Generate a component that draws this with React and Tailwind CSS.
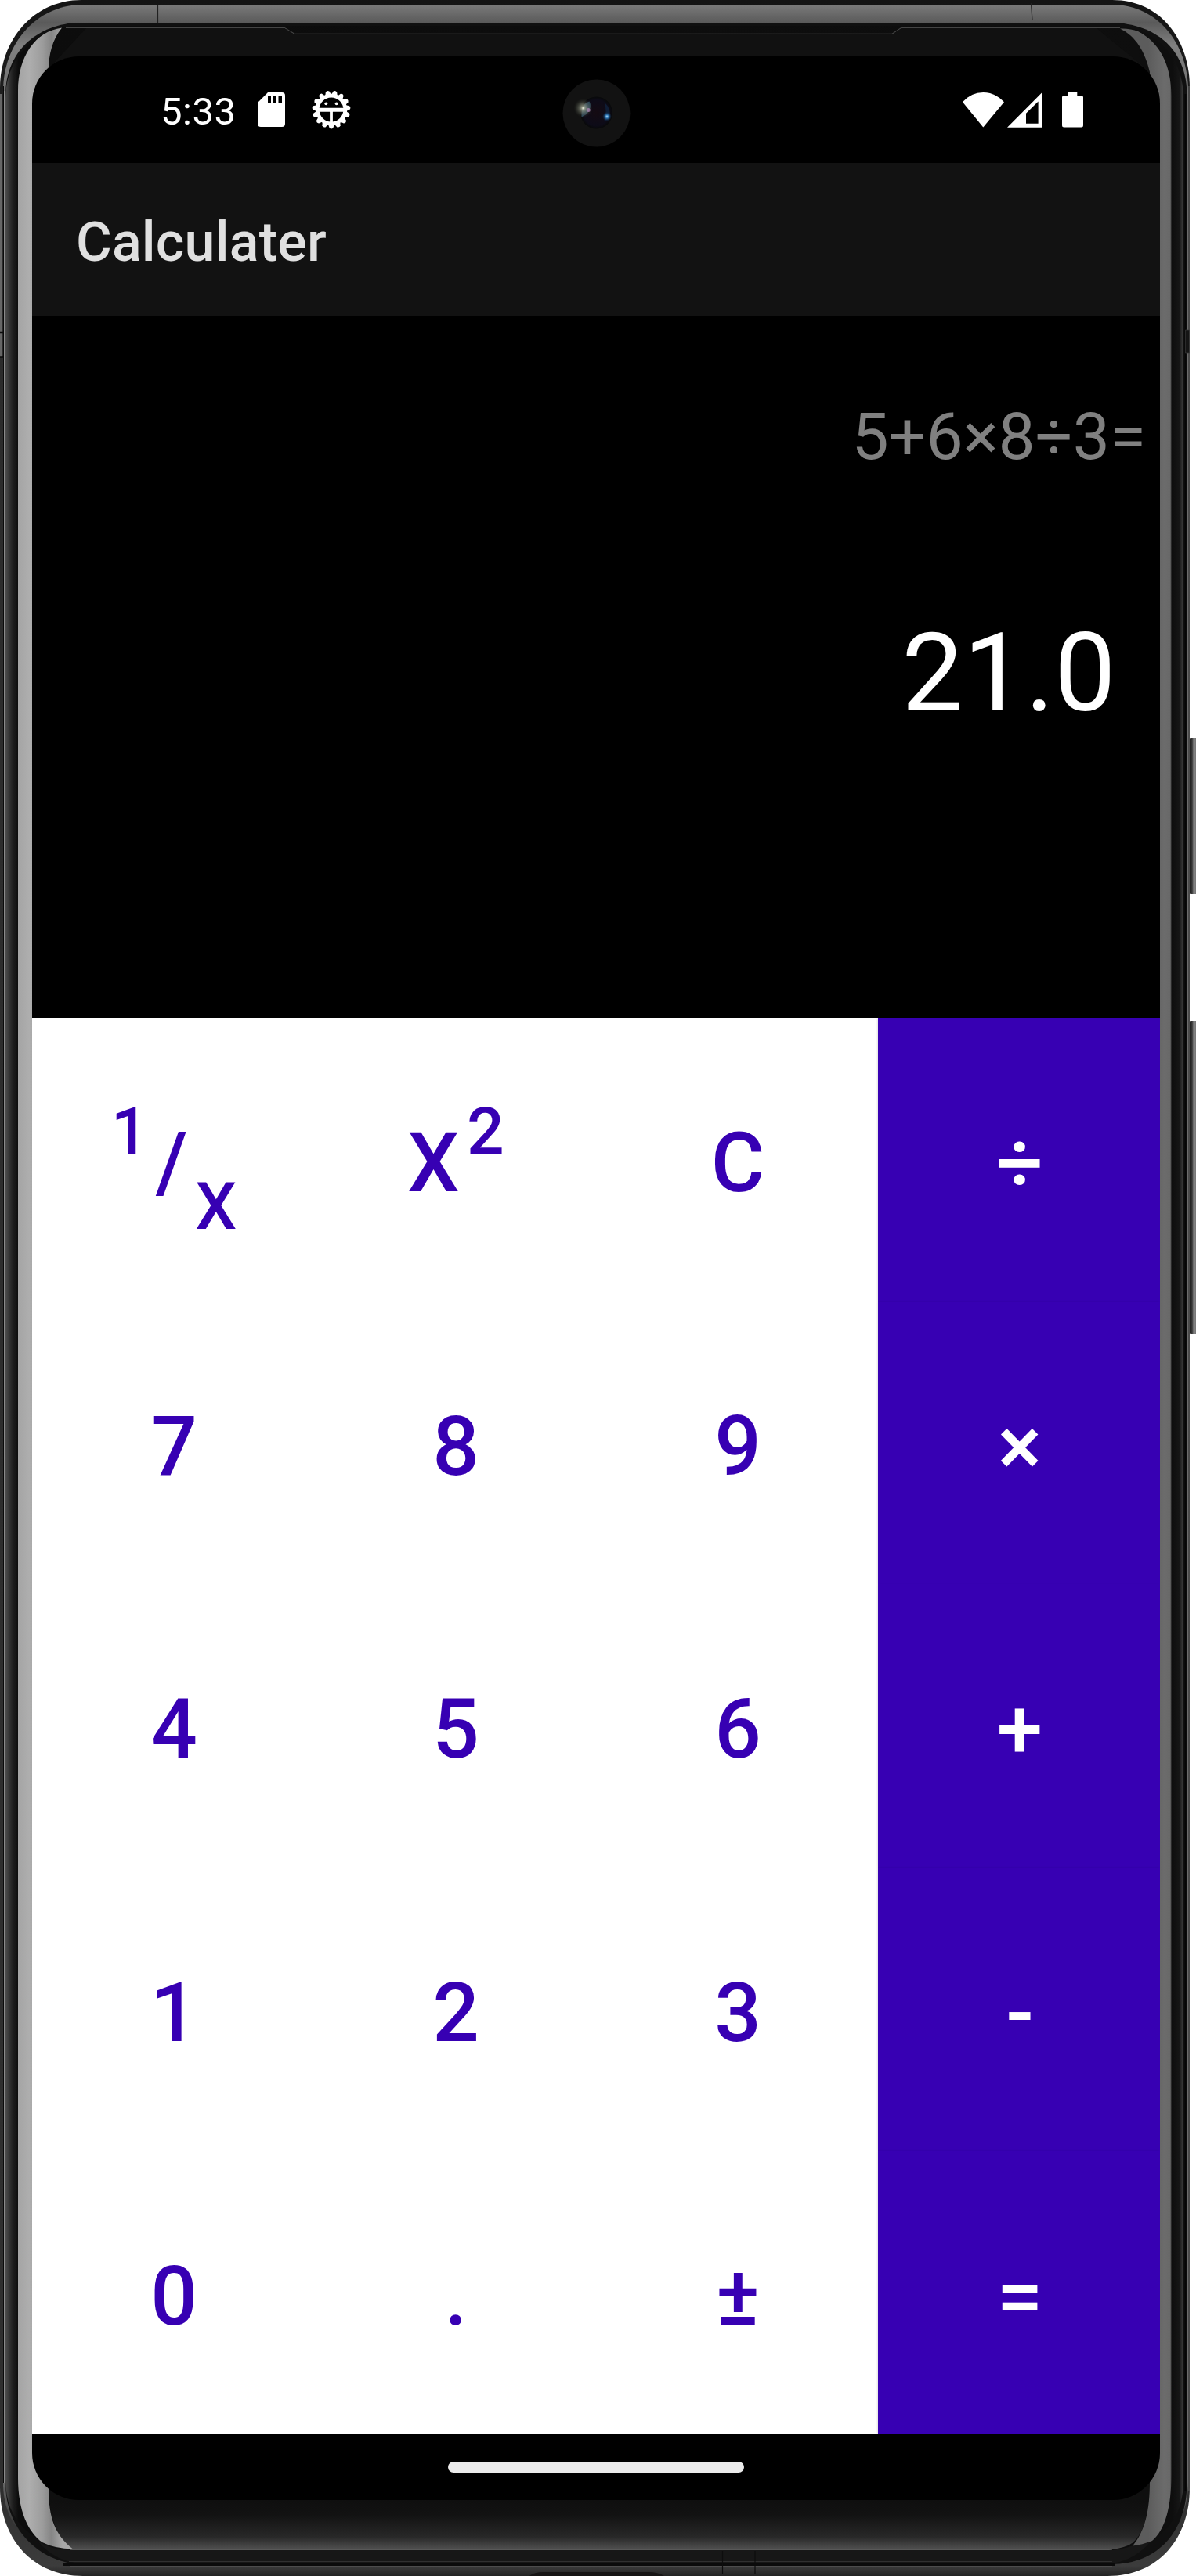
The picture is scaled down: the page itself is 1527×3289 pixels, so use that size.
import React from "react";

const TEETH = Array.from({ length: 15 }, (_, i) => 180 + i * 24);

function SdCardIcon() {
  return (
    <svg width="35" height="44" viewBox="0 0 35 44">
      <path
        fill="#fff"
        fillRule="evenodd"
        d="M13 0H31Q35 0 35 4V40Q35 44 31 44H4Q0 44 0 40V13ZM13 5V13.500H17V5ZM20 5V13.500H24V5ZM26.500 5V13.500H31V5Z"
      />
    </svg>
  );
}

function BugGearIcon() {
  return (
    <svg width="50" height="50" viewBox="-25 -25 50 50">
      {TEETH.map((a) => (
        <path key={a} transform={`rotate(${a})`} fill="#fff" d="M-4.200 -18L-2.300 -23.500Q0 -25.500 2.300 -23.500L4.200 -18Z" />
      ))}
      <circle r="17.800" fill="none" stroke="#fff" strokeWidth="4.800" />
      <path d="M-16 -2.300H16V2.700H1.900V16H-1.900V2.700H-16Z" fill="#fff" />
      <circle cx="-6.700" cy="-7.700" r="1.900" fill="#fff" />
      <circle cx="6.700" cy="-7.700" r="1.900" fill="#fff" />
    </svg>
  );
}

function WifiIcon() {
  return (
    <svg width="53" height="45" viewBox="0 0 53 45">
      <path fill="#fff" d="M0 12.300Q11 0 26.300 0Q41.500 0 53 12.300L26.300 44.500Z" />
    </svg>
  );
}

function SignalIcon() {
  return (
    <svg width="45" height="45" viewBox="0 0 45 45">
      <path fill="#fff" fillRule="evenodd" d="M0 44.700L44.300 0.300V44.700ZM24 26.800V39.800H39.600V11.500Z" />
    </svg>
  );
}

function BatteryIcon() {
  return (
    <svg width="27" height="46" viewBox="0 0 27 46">
      <path fill="#fff" d="M8 0H19.300V5H24.500Q27 5 27 7.500V43Q27 45.500 24.500 45.500H2.500Q0 45.500 0 43V7.500Q0 5 2.500 5H8Z" />
    </svg>
  );
}

function Camera() {
  return (
    <svg className="absolute left-[677px] top-[29px]" width="87" height="87" viewBox="-43.500 -43.500 87 87">
      <defs>
        <radialGradient id="lens">
          <stop offset="0" stopColor="#140a12" />
          <stop offset="0.8" stopColor="#0d0b18" />
          <stop offset="1" stopColor="#080909" />
        </radialGradient>
        <radialGradient id="glowWarm">
          <stop offset="0" stopColor="#f0f2e0" />
          <stop offset="0.2" stopColor="#a0a692" stopOpacity="0.8" />
          <stop offset="1" stopColor="#30352c" stopOpacity="0" />
        </radialGradient>
        <radialGradient id="glowBlue">
          <stop offset="0" stopColor="#b0e0ff" />
          <stop offset="0.35" stopColor="#2f76b4" />
          <stop offset="1" stopColor="#0c2748" stopOpacity="0" />
        </radialGradient>
      </defs>
      <circle r="43" fill="#121212" />
      <circle cy="-0.500" r="20.500" fill="url(#lens)" />
      <path d="M-19 5Q-20 -12 -9 -15Q-5 -8 -12 1Z" fill="#34566c" opacity="0.8" />
      <path d="M10 -14Q19 -6 17 6L10 10Q14 -3 10 -14Z" fill="#10294a" opacity="0.6" />
      <circle cx="-17" cy="-6.500" r="12" fill="url(#glowWarm)" />
      <circle cx="-10.300" cy="-4" r="2.500" fill="#a985b0" opacity="0.8" />
      <circle cx="13.500" cy="4.300" r="6" fill="url(#glowBlue)" />
    </svg>
  );
}

function DeviceFrame() {
  return (
    <svg className="absolute inset-0" width="1527" height="3289" viewBox="0 0 1527 3289">
      <defs>
        <linearGradient id="body" x1="0" y1="0" x2="0" y2="1">
          <stop offset="0" stopColor="#141414" />
          <stop offset="0.03" stopColor="#1c1c1c" />
          <stop offset="0.06" stopColor="#2b2b2b" />
          <stop offset="0.97" stopColor="#2f2f2f" />
          <stop offset="0.996" stopColor="#3c3c3c" />
          <stop offset="1" stopColor="#242424" />
        </linearGradient>
        <linearGradient id="band" gradientUnits="userSpaceOnUse" x1="0" y1="6" x2="0" y2="3262">
          <stop offset="0" stopColor="#7a7a7a" />
          <stop offset="0.007" stopColor="#5a5a5a" />
          <stop offset="0.016" stopColor="#808080" />
          <stop offset="0.041" stopColor="#6c6c6c" />
          <stop offset="0.97" stopColor="#6c6c6c" />
          <stop offset="0.99" stopColor="#343434" />
          <stop offset="1" stopColor="#363636" />
        </linearGradient>
        <linearGradient id="bevel" gradientUnits="userSpaceOnUse" x1="7" y1="0" x2="1512" y2="0">
          <stop offset="0" stopColor="#4e4e4e" />
          <stop offset="0.006" stopColor="#1f1f1f" />
          <stop offset="0.011" stopColor="#0c0c0c" />
          <stop offset="0.990" stopColor="#0e0e0e" />
          <stop offset="0.996" stopColor="#161616" />
          <stop offset="1" stopColor="#4a4a4a" />
        </linearGradient>
        <linearGradient id="chin" gradientUnits="userSpaceOnUse" x1="0" y1="3192" x2="0" y2="3255">
          <stop offset="0" stopColor="#0f0f0f" />
          <stop offset="0.3" stopColor="#121212" />
          <stop offset="0.75" stopColor="#282828" />
          <stop offset="1" stopColor="#505050" />
        </linearGradient>
        <linearGradient id="glareLeft" gradientUnits="userSpaceOnUse" x1="23" y1="0" x2="80" y2="0">
          <stop offset="0" stopColor="#a4a4a4" />
          <stop offset="0.250" stopColor="#aeaeae" />
          <stop offset="0.550" stopColor="#9c9c9c" />
          <stop offset="0.75" stopColor="#858585" />
          <stop offset="1" stopColor="#a8a8a8" />
        </linearGradient>
        <linearGradient id="glareRight" gradientUnits="userSpaceOnUse" x1="1466" y1="0" x2="1496" y2="0">
          <stop offset="0" stopColor="#5c5c5c" />
          <stop offset="0.7" stopColor="#6c6c6c" />
          <stop offset="0.930" stopColor="#686868" />
          <stop offset="1" stopColor="#3a3a3a" />
        </linearGradient>
        <linearGradient id="key" gradientUnits="userSpaceOnUse" x1="1518" y1="0" x2="1527" y2="0">
          <stop offset="0" stopColor="#1c1c1c" />
          <stop offset="0.450" stopColor="#343434" />
          <stop offset="0.7" stopColor="#8c8c8c" />
          <stop offset="1" stopColor="#747474" />
        </linearGradient>
      </defs>

      <rect x="1517" y="942" width="14" height="199" rx="4" fill="url(#key)" />
      <rect x="1517" y="1304" width="14" height="399" rx="4" fill="url(#key)" />

      <path
        d="M104 0H1420C1483 0 1519 52 1519 112V3176C1519 3240 1480 3289 1414 3289H106C40 3289 0 3240 0 3176V112C0 52 42 0 104 0Z"
        fill="url(#body)"
      />
      <path
        d="M104 6H1420C1478 6 1517 56 1517 116V3170C1517 3225 1482 3262 1420 3262H100C40 3262 4 3225 4 3170V116C4 56 46 7 104 6Z"
        fill="url(#band)"
      />
      <path
        d="M96 29H1425C1480 33 1515.500 66 1515.500 122V3170C1515.500 3230 1480 3274 1418 3274H100C50 3270 7 3230 7 3170V122C7 66 46 33 96 29Z"
        fill="#101010"
      />
      <path
        d="M92 33H1425C1478 36 1511 74 1511 126V3166C1511 3220 1480 3255 1414 3255H96C42 3250 7 3220 7 3166V126C7 78 40 38 92 33Z"
        fill="url(#bevel)"
      />
      <path d="M1513.500 120V3180" stroke="#050505" strokeWidth="2" />
      <path d="M1518 110V3180" stroke="#6a6a6a" strokeWidth="1" />
      <path d="M4.500 110V3170" stroke="#0a0a0a" strokeWidth="1" />
      <path d="M6 116V3170" stroke="#8a8a8a" strokeWidth="2" />

      <path d="M201.500 7V29M1316.500 4L1318 26" stroke="#202020" strokeWidth="1.200" />
      <path d="M84 35.300H363L376 43.300H1139L1151 35.300H1430" fill="none" stroke="#454545" strokeWidth="1.200" />
      <path d="M110 36H363L376 44H1139L1151 36H1400L1466 90V130H60V90Z" fill="#111" />

      <path d="M62 3130H1468V3180C1466 3215 1458 3242 1440 3250Q1428 3255 1414 3255H93C72 3240 64 3215 62 3180Z" fill="url(#chin)" />
      <path d="M90 3255.500H1420" stroke="#585858" strokeWidth="1" />
      <path
        d="M92 3256H1416Q1452 3254 1478 3232Q1454 3272 1410 3274H110Q70 3272 48 3244Q66 3256 92 3256Z"
        fill="#171717"
      />
      <path d="M88 3270.500H1420" stroke="#303030" strokeWidth="1" />
      <path d="M80 3274H1424" stroke="#0b0b0b" strokeWidth="4" />
      <path d="M90 3277H1420" stroke="#555" strokeWidth="1.500" />
      <path d="M676 3289Q682 3284 694 3284H828Q840 3284 848 3289Z" fill="#171515" />
      <path d="M922.500 3257V3287M964 3257V3287" stroke="#0d0d0d" strokeWidth="1.200" />

      <path
        d="M79 35.500C45 40 23 72 23 116V3164C23 3206 36 3233 54 3246Q70 3254 93 3254.500C70 3236 62 3215 62 3176V90C62 70 67 50 79 35.500Z"
        fill="url(#glareLeft)"
      />
      <path
        d="M1430 36.500Q1443 36 1453 40C1480 54 1495.500 82 1495.500 122V3160C1495.500 3200 1488 3230 1471 3244Q1458 3249 1446 3250.500C1462 3232 1468 3205 1468 3168V92C1462 66 1450 46 1430 36.500Z"
        fill="url(#glareRight)"
      />
      <path d="M1513.500 421H1518.500V451H1513.500Z" fill="#151515" stroke="#3a3a3a" strokeWidth="0.700" />
      <path d="M1 120V456" stroke="#666" strokeWidth="2" />
      <path d="M0 424.500H4M0 456H4" stroke="#0c0c0c" strokeWidth="1.500" />
    </svg>
  );
}

function StatusBar() {
  return (
    <div className="relative flex h-[136px] items-center justify-between pl-[164px] pr-[98px]">
      <div className="flex items-center">
        <span className="w-[124px] pt-[6px] text-[49px] leading-[60px] tracking-[0.5px]">5:33</span>
        <SdCardIcon />
        <div className="ml-[34px]">
          <BugGearIcon />
        </div>
      </div>
      <Camera />
      <div className="flex items-center">
        <WifiIcon />
        <div className="ml-[4px] mr-[25px]">
          <SignalIcon />
        </div>
        <BatteryIcon />
      </div>
    </div>
  );
}

const KEYS = [
  ["recip", "square", "C", "÷"],
  ["7", "8", "9", "×"],
  ["4", "5", "6", "+"],
  ["1", "2", "3", "-"],
  ["0", ".", "±", "="],
];

function KeyLabel({ value }) {
  if (value === "recip") {
    return (
      <span className="-mr-[0.0893em]">
        <span className="relative -top-[48px] text-[84px] leading-none">1</span>/
        <span className="relative top-[48px] text-[84px] leading-none">X</span>
      </span>
    );
  }
  if (value === "square") {
    return (
      <span className="-mr-[0.0893em]">
        X<span className="relative -top-[48px] text-[84px] leading-none">2</span>
      </span>
    );
  }
  return <span className="-mr-[0.0893em]">{value}</span>;
}

function Keypad() {
  return (
    <div className="grid h-[1808px] grid-cols-4 grid-rows-5 bg-white text-[105px] leading-[124px] font-medium tracking-[0.0893em]">
      {KEYS.flat().map((value, i) => (
        <button
          key={value}
          className={
            i % 4 === 3
              ? "flex items-center justify-center bg-[#3700b3] pl-[2px] pt-[11px] text-white shadow-[-1px_0_2px_rgba(0,0,0,0.12)]"
              : "flex items-center justify-center pl-[2px] pt-[11px] text-[#3700b3]"
          }
        >
          <KeyLabel value={value} />
        </button>
      ))}
    </div>
  );
}

export default function App() {
  return (
    <div className="relative h-[3289px] w-[1527px] overflow-hidden bg-white pl-[41px] pt-[72px] font-['Roboto',sans-serif] text-white">
      <DeviceFrame />
      <div className="relative flex h-[3120px] w-[1440px] flex-col overflow-hidden rounded-[60px] bg-black">
        <StatusBar />
        <header className="flex h-[196px] items-center bg-[#121212] pl-[56px] pt-[6px]">
          <h1 className="text-[70px] leading-[82px] font-medium tracking-[0.2px] text-[#e0e0e0]">Calculater</h1>
        </header>
        <section className="flex h-[896px] flex-col items-end pt-[104px]">
          <p className="pr-[18px] text-[84px] leading-[100px] text-[#808080]">5+6×8÷3=</p>
          <p className="mt-[169px] pr-[56px] text-[140px] leading-[164px] tracking-[0.2px]">21.0</p>
        </section>
        <Keypad />
        <nav className="flex h-[84px] items-center justify-center">
          <div className="h-[14px] w-[378px] rounded-full bg-[#ebebeb]" />
        </nav>
      </div>
    </div>
  );
}
